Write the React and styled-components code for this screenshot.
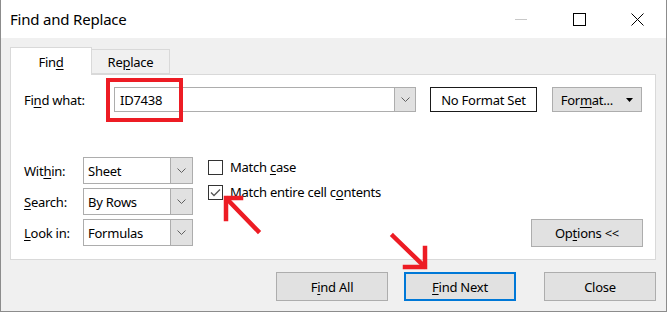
import React from "react"
import styled, { createGlobalStyle } from "styled-components"

const GlobalStyle = createGlobalStyle`
  html, body {
    margin: 0;
    padding: 0;
    background: #ffffff;
  }
  body {
    font-family: "Noto Sans", "Liberation Sans", sans-serif;
  }
`

const Window = styled.div`
  position: relative;
  box-sizing: border-box;
  width: 667px;
  height: 312px;
  display: flex;
  flex-direction: column;
  background: #f0f0f0;
  border-left: 1px solid #8c8c8c;
  border-right: 1px solid #8c8c8c;
  border-bottom: 1px solid #8c8c8c;
  color: #000;
  font-size: 13px;
  letter-spacing: -0.25px;
`

const TitleBar = styled.div`
  height: 38px;
  flex: none;
  display: flex;
  align-items: center;
  background: #ffffff;
  padding-left: 9px;
`

const Title = styled.div`
  flex: 1;
  font-size: 15px;
  letter-spacing: -0.2px;
  color: #000;
  padding-bottom: 1px;
`

const CaptionButton = styled.div`
  width: 58px;
  height: 38px;
  display: flex;
  align-items: center;
  justify-content: center;
`

const Body = styled.div`
  flex: 1;
  display: flex;
  flex-direction: column;
  padding: 9px 10px 0 9px;
`

const TabRow = styled.div`
  display: flex;
  align-items: flex-end;
  height: 28px;
  margin-bottom: -1px;
  position: relative;
  z-index: 1;
`

const Tab = styled.div`
  box-sizing: border-box;
  display: flex;
  align-items: center;
  justify-content: center;
  border: 1px solid #d9d9d9;
  ${(p) =>
    p.$active
      ? `
    width: 82px;
    height: 28px;
    background: #ffffff;
    border-bottom: none;
    padding-top: 1px;
  `
      : `
    width: 78px;
    height: 25px;
    margin-bottom: 1px;
    background: #f0f0f0;
    border-left: none;
    padding-top: 1px;
  `}
`

const Panel = styled.div`
  box-sizing: border-box;
  height: 186px;
  background: #ffffff;
  border: 1px solid #d9d9d9;
  padding: 12px 12px 12px 13px;
  display: flex;
  flex-direction: column;
`

const FindRow = styled.div`
  display: flex;
  align-items: center;
  height: 25px;
`

const Label = styled.div`
  width: ${(p) => p.$width}px;
  flex: none;
  white-space: nowrap;
`

const Key = styled.span`
  text-decoration: underline;
  text-underline-offset: 2px;
`

const Combo = styled.div`
  box-sizing: border-box;
  width: ${(p) => p.$width}px;
  height: ${(p) => p.$height}px;
  flex: none;
  display: flex;
  border: 1px solid #adadad;
  background: #ffffff;
`

const ComboText = styled.div`
  flex: 1;
  display: flex;
  align-items: center;
  padding-left: ${(p) => p.$pad || 5}px;
`

const ComboButton = styled.div`
  width: ${(p) => p.$width}px;
  flex: none;
  display: flex;
  align-items: center;
  justify-content: center;
  background: #e1e1e1;
  border-left: 1px solid #adadad;
`

const FormatBox = styled.div`
  box-sizing: border-box;
  width: 107px;
  height: 25px;
  margin-left: 14px;
  display: flex;
  align-items: center;
  justify-content: center;
  border: 1px solid #1a1a1a;
  white-space: nowrap;
`

const Button = styled.div`
  box-sizing: border-box;
  width: ${(p) => p.$width}px;
  height: ${(p) => p.$height}px;
  flex: none;
  display: flex;
  align-items: center;
  justify-content: center;
  background: #e1e1e1;
  border: ${(p) => (p.$default ? "2px solid #0078d7" : "1px solid #adadad")};
  margin-left: ${(p) => p.$offset || 0}px;
  white-space: nowrap;
`

const FormatButton = styled(Button)`
  margin-left: 15px;
  justify-content: flex-end;
  padding-right: 8px;
  gap: 13px;
`

const Lower = styled.div`
  margin-top: 45px;
  display: flex;
  flex: 1;
`

const SelectGrid = styled.div`
  display: grid;
  grid-template-columns: 59px 110px;
  grid-auto-rows: 27px;
  row-gap: 4px;
  align-items: center;
`

const Checks = styled.div`
  margin-left: 15px;
  margin-top: 0;
  display: flex;
  flex-direction: column;
  gap: 5px;
`

const CheckRow = styled.div`
  display: flex;
  align-items: center;
  height: 20px;
  gap: 7px;
`

const CheckBox = styled.div`
  box-sizing: border-box;
  width: 15px;
  height: 15px;
  border: 1px solid #333333;
  background: #ffffff;
  display: flex;
  align-items: center;
  justify-content: center;
`

const OptionsButton = styled(Button)`
  margin-left: auto;
  align-self: flex-end;
`

const Footer = styled.div`
  display: flex;
  justify-content: flex-end;
  padding-top: 12px;
  gap: 16px;
`

const Overlay = styled.svg`
  position: absolute;
  left: 0;
  top: 0;
  pointer-events: none;
`

const Chevron = () => (
  <svg width="9" height="6" viewBox="0 0 9 6">
    <polyline points="0.5,0.5 4.5,4.5 8.5,0.5" fill="none" stroke="#606060" strokeWidth="1" />
  </svg>
)

const Select = ({ value }) => (
  <Combo $width={110} $height={27}>
    <ComboText $pad={4}>{value}</ComboText>
    <ComboButton $width={21}>
      <Chevron />
    </ComboButton>
  </Combo>
)

const Tick = () => (
  <svg width="11" height="9" viewBox="0 0 11 9">
    <polyline points="1,4.5 4,7.5 10,1.5" fill="none" stroke="#555" strokeWidth="1.3" />
  </svg>
)

const App = () => {
  return (
    <>
      <GlobalStyle />
      <Window>
        <TitleBar>
          <Title>Find and Replace</Title>
          <CaptionButton>
            <svg width="12" height="12" viewBox="0 0 12 12">
              <line x1="0" y1="6.5" x2="12" y2="6.5" stroke="#c8c8c8" strokeWidth="1" />
            </svg>
          </CaptionButton>
          <CaptionButton>
            <svg width="13" height="13" viewBox="0 0 13 13">
              <rect x="0.5" y="0.5" width="12" height="12" fill="none" stroke="#000" strokeWidth="1" />
            </svg>
          </CaptionButton>
          <CaptionButton>
            <svg width="13" height="13" viewBox="0 0 13 13">
              <path d="M0.5 0.5 L12.5 12.5 M12.5 0.5 L0.5 12.5" stroke="#000" strokeWidth="1" />
            </svg>
          </CaptionButton>
        </TitleBar>

        <Body>
          <TabRow>
            <Tab $active>
              Fin<Key>d</Key>
            </Tab>
            <Tab>
              Re<Key>p</Key>lace
            </Tab>
          </TabRow>

          <Panel>
            <FindRow>
              <Label $width={90}>
                Fi<Key>n</Key>d what:
              </Label>
              <Combo $width={302} $height={25}>
                <ComboText>ID7438</ComboText>
                <ComboButton $width={20}>
                  <Chevron />
                </ComboButton>
              </Combo>
              <FormatBox>No Format Set</FormatBox>
              <FormatButton $width={90} $height={25}>
                <span>
                  For<Key>m</Key>at...
                </span>
                <svg width="7" height="4" viewBox="0 0 7 4">
                  <polygon points="0,0 7,0 3.5,4" fill="#000" />
                </svg>
              </FormatButton>
            </FindRow>

            <Lower>
              <SelectGrid>
                <Label>
                  Wit<Key>h</Key>in:
                </Label>
                <Select value="Sheet" />
                <Label>
                  <Key>S</Key>earch:
                </Label>
                <Select value="By Rows" />
                <Label>
                  <Key>L</Key>ook in:
                </Label>
                <Select value="Formulas" />
              </SelectGrid>

              <Checks>
                <CheckRow>
                  <CheckBox />
                  <span>
                    Match <Key>c</Key>ase
                  </span>
                </CheckRow>
                <CheckRow>
                  <CheckBox>
                    <Tick />
                  </CheckBox>
                  <span>
                    Match entire cell c<Key>o</Key>ntents
                  </span>
                </CheckRow>
              </Checks>

              <OptionsButton $width={112} $height={28}>
                Op<Key>t</Key>ions &lt;&lt;
              </OptionsButton>
            </Lower>
          </Panel>

          <Footer>
            <Button $width={112} $height={29}>
              F<Key>i</Key>nd All
            </Button>
            <Button $width={112} $height={29} $default>
              <Key>F</Key>ind Next
            </Button>
            <Button $width={112} $height={29} $offset={12}>
              Close
            </Button>
          </Footer>
        </Body>

        {/* red annotations drawn over the dialog */}
        <Overlay width="667" height="312" viewBox="0 0 667 312">
          <rect x="107" y="80" width="73" height="40" fill="none" stroke="#ed1c24" strokeWidth="4" />
          <g stroke="#ed1c24" strokeWidth="4.5" fill="none" strokeLinecap="square">
            <line x1="226" y1="199" x2="257" y2="231" />
            <polyline points="240,198 225,198 225,219" />
            <line x1="392" y1="236" x2="423" y2="266" />
            <polyline points="404,267 424,267 424,248" />
          </g>
        </Overlay>
      </Window>
    </>
  )
}

export default App
